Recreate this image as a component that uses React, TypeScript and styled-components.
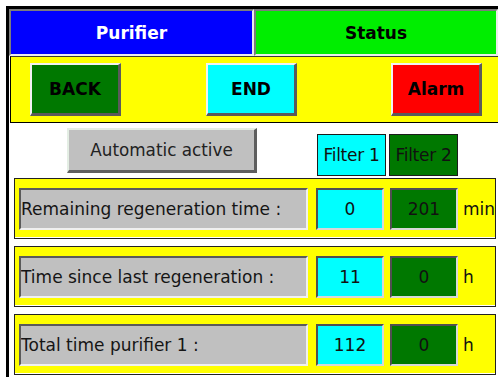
import styled, { createGlobalStyle } from "styled-components";

const GlobalStyle = createGlobalStyle`
  html, body {
    margin: 0;
    padding: 0;
    background: #ffffff;
    overflow: hidden;
  }
  body {
    font-family: "DejaVu Sans", "Liberation Sans", sans-serif;
  }
  * {
    box-sizing: border-box;
  }
`;

const rows = [
  { label: "Remaining regeneration time :", first: "0", second: "201", unit: "min" },
  { label: "Time since last regeneration :", first: "11", second: "0", unit: "h" },
  { label: "Total time purifier 1 :", first: "112", second: "0", unit: "h" },
];

const App = () => {
  return (
    <>
      <GlobalStyle />
      <StyledFrame>
        <StyledHeader>
          <StyledHeaderCell $bg="#0000ff" $color="#ffffff">
            Purifier
          </StyledHeaderCell>
          <StyledHeaderCell $bg="#00ee00" $color="#000000">
            Status
          </StyledHeaderCell>
        </StyledHeader>

        <StyledToolbar>
          <StyledNavButton $bg="#007800" $offset={19}>
            BACK
          </StyledNavButton>
          <StyledNavButton $bg="#00ffff" $offset={85}>
            END
          </StyledNavButton>
          <StyledNavButton $bg="#ff0000" $offset={94}>
            Alarm
          </StyledNavButton>
        </StyledToolbar>

        <StyledContent>
          <StyledTopRow>
            <StyledModeButton>Automatic active</StyledModeButton>
            <StyledFilters>
              <StyledFilterTag $bg="#00ffff">Filter 1</StyledFilterTag>
              <StyledFilterTag $bg="#007800">Filter 2</StyledFilterTag>
            </StyledFilters>
          </StyledTopRow>

          {rows.map((row) => (
            <StyledPanel key={row.label}>
              <StyledLabel>{row.label}</StyledLabel>
              <StyledValue $bg="#00ffff" $offset={8}>
                {row.first}
              </StyledValue>
              <StyledValue $bg="#007800" $offset={6}>
                {row.second}
              </StyledValue>
              <StyledUnit>{row.unit}</StyledUnit>
            </StyledPanel>
          ))}
        </StyledContent>
      </StyledFrame>
    </>
  );
};

const StyledFrame = styled.div`
  margin: 6px 0 0 6px;
  width: 492px;
  height: 371px;
  border-left: 3px solid #000000;
  border-top: 3px solid #000000;
  background: #ffffff;
`;

const StyledHeader = styled.div`
  display: grid;
  grid-template-columns: 245px 1fr;
  height: 47px;
`;

const StyledHeaderCell = styled.div<{ $bg: string; $color: string }>`
  display: flex;
  align-items: center;
  justify-content: center;
  background: ${(p) => p.$bg};
  color: ${(p) => p.$color};
  border-style: solid;
  border-width: 2px;
  border-color: #7c7c7c #ececec #ececec #7c7c7c;
  font-size: 17px;
  font-weight: bold;
`;

const StyledToolbar = styled.div`
  display: flex;
  align-items: center;
  height: 67px;
  margin-left: 1px;
  background: #ffff00;
  border-top: 1px solid #3a3a3a;
  border-left: 1px solid #000000;
  border-bottom: 1px solid #000000;
`;

const StyledNavButton = styled.div<{ $bg: string; $offset: number }>`
  display: flex;
  align-items: center;
  justify-content: center;
  width: 91px;
  height: 53px;
  margin-left: ${(p) => p.$offset}px;
  background: ${(p) => p.$bg};
  border-style: solid;
  border-width: 2px 3px 3px 2px;
  border-color: #f2f2f2 #5a5a5a #5a5a5a #f2f2f2;
  color: #000000;
  font-size: 17px;
  font-weight: bold;
`;

const StyledContent = styled.div`
  display: flex;
  flex-direction: column;
  gap: 7px;
`;

const StyledTopRow = styled.div`
  display: flex;
  align-items: flex-start;
  height: 53px;
  padding: 5px 0 0 58px;
  margin-bottom: -5px;
`;

const StyledModeButton = styled.div`
  display: flex;
  align-items: center;
  justify-content: center;
  width: 190px;
  height: 45px;
  background: #c0c0c0;
  border-style: solid;
  border-width: 2px 3px 3px 2px;
  border-color: #e4eee4 #5e5e5e #5e5e5e #e4eee4;
  color: #222222;
  font-size: 16.8px;
`;

const StyledFilters = styled.div`
  display: flex;
  gap: 3px;
  margin: 6px 0 0 60px;
`;

const StyledFilterTag = styled.div<{ $bg: string }>`
  display: flex;
  align-items: center;
  justify-content: center;
  width: 69px;
  height: 42px;
  background: ${(p) => p.$bg};
  border: 1px solid #1c1c1c;
  color: #111111;
  font-size: 17px;
  white-space: nowrap;
  letter-spacing: -0.3px;
`;

const StyledPanel = styled.div`
  display: flex;
  align-items: center;
  width: 482px;
  height: 61px;
  margin-left: 5px;
  padding-left: 4px;
  background: #ffff00;
  border: 1px solid #222222;
  box-shadow: inset 0 -1px 0 #ffffff;
`;

const StyledLabel = styled.div`
  display: flex;
  align-items: center;
  width: 289px;
  height: 42px;
  padding-left: 0;
  background: #c0c0c0;
  border-style: solid;
  border-width: 2px;
  border-color: #5a5a5a #f0f0f0 #f0f0f0 #5a5a5a;
  color: #151515;
  font-size: 17px;
  white-space: nowrap;
  overflow: hidden;
`;

const StyledValue = styled.div<{ $bg: string; $offset: number }>`
  display: flex;
  align-items: center;
  justify-content: center;
  width: 68px;
  height: 42px;
  margin-left: ${(p) => p.$offset}px;
  background: ${(p) => p.$bg};
  border-style: solid;
  border-width: 2px;
  border-color: #505050 #d8d8d8 #d8d8d8 #505050;
  color: #111111;
  font-size: 17px;
`;

const StyledUnit = styled.div`
  margin-left: 5px;
  color: #111111;
  font-size: 17px;
`;

export default App;
